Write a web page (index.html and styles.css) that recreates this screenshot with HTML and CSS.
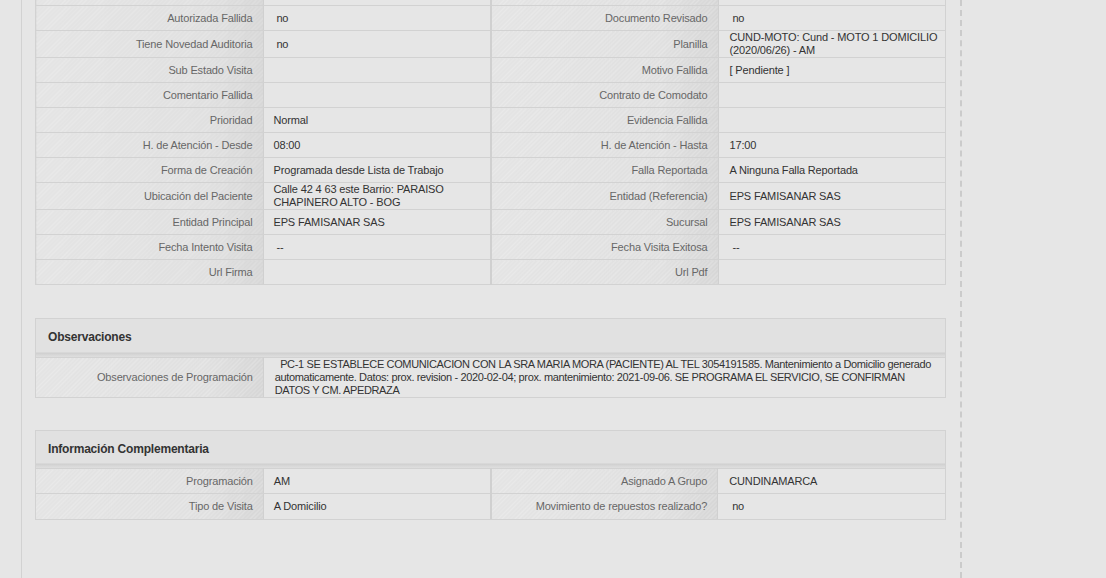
FILE: index.html
```html
<!DOCTYPE html>
<html lang="es">
<head>
    <meta charset="UTF-8">
    <title>Detalle de Visita</title>
    <link rel="stylesheet" href="styles.css">
</head>
<body>
    <div class="page">
        <div class="rail"></div>

        <div class="main">
            <!-- datos generales -->
            <table class="grid">
                <tr><td class="lbl"></td><td class="val"></td><td class="lbl sep"></td><td class="val"></td></tr>
                <tr><td class="lbl">Autorizada Fallida</td><td class="val">&nbsp;no</td><td class="lbl sep">Documento Revisado</td><td class="val">&nbsp;no</td></tr>
                <tr><td class="lbl">Tiene Novedad Auditoria</td><td class="val">&nbsp;no</td><td class="lbl sep">Planilla</td><td class="val">CUND-MOTO: Cund - MOTO 1 DOMICILIO (2020/06/26) - AM</td></tr>
                <tr><td class="lbl">Sub Estado Visita</td><td class="val"></td><td class="lbl sep">Motivo Fallida</td><td class="val">[ Pendiente ]</td></tr>
                <tr><td class="lbl">Comentario Fallida</td><td class="val"></td><td class="lbl sep">Contrato de Comodato</td><td class="val"></td></tr>
                <tr><td class="lbl">Prioridad</td><td class="val">Normal</td><td class="lbl sep">Evidencia Fallida</td><td class="val"></td></tr>
                <tr><td class="lbl">H. de Atención - Desde</td><td class="val">08:00</td><td class="lbl sep">H. de Atención - Hasta</td><td class="val">17:00</td></tr>
                <tr><td class="lbl">Forma de Creación</td><td class="val">Programada desde Lista de Trabajo</td><td class="lbl sep">Falla Reportada</td><td class="val">A Ninguna Falla Reportada</td></tr>
                <tr><td class="lbl">Ubicación del Paciente</td><td class="val">Calle 42 4 63 este Barrio: PARAISO CHAPINERO ALTO - BOG</td><td class="lbl sep">Entidad (Referencia)</td><td class="val">EPS FAMISANAR SAS</td></tr>
                <tr><td class="lbl">Entidad Principal</td><td class="val">EPS FAMISANAR SAS</td><td class="lbl sep">Sucursal</td><td class="val">EPS FAMISANAR SAS</td></tr>
                <tr><td class="lbl">Fecha Intento Visita</td><td class="val">&nbsp;--</td><td class="lbl sep">Fecha Visita Exitosa</td><td class="val">&nbsp;--</td></tr>
                <tr><td class="lbl">Url Firma</td><td class="val"></td><td class="lbl sep">Url Pdf</td><td class="val"></td></tr>
            </table>

            <div class="panel">
                <div class="panel-head">Observaciones</div>
                <table class="grid">
                    <tr>
                        <td class="lbl">Observaciones de Programación</td>
                        <td class="val wide" colspan="3">&nbsp;&nbsp;PC-1 SE ESTABLECE COMUNICACION CON LA SRA MARIA MORA (PACIENTE) AL TEL 3054191585. Mantenimiento a Domicilio generado automaticamente. Datos: prox. revision - 2020-02-04; prox. mantenimiento: 2021-09-06. SE PROGRAMA EL SERVICIO, SE CONFIRMAN DATOS Y CM. APEDRAZA</td>
                    </tr>
                </table>
            </div>

            <div class="panel">
                <div class="panel-head">Información Complementaria</div>
                <table class="grid">
                    <tr><td class="lbl">Programación</td><td class="val">AM</td><td class="lbl sep">Asignado A Grupo</td><td class="val">CUNDINAMARCA</td></tr>
                    <tr><td class="lbl">Tipo de Visita</td><td class="val">A Domicilio</td><td class="lbl sep">Movimiento de repuestos realizado?</td><td class="val">&nbsp;no</td></tr>
                </table>
            </div>
        </div>

        <div class="divider"></div>
    </div>
</body>
</html>
```

FILE: styles.css
```css
* {
    box-sizing: border-box;
}

html, body {
    margin: 0;
    padding: 0;
    height: 100%;
    overflow: hidden;
    background: #e6e6e6;
    font-family: "Liberation Sans", Arial, sans-serif;
    font-size: 11px;
    letter-spacing: -0.15px;
    color: #333;
}

.page {
    display: flex;
    min-height: 100%;
}

.rail {
    width: 22px;
    border-right: 1px solid #d2d2d2;
    flex-shrink: 0;
}

.main {
    width: 911px;
    margin-left: 13px;
    margin-top: -20px;
    flex-shrink: 0;
}

.divider {
    margin-left: 14px;
    border-left: 2px dashed #cbcbcb;
}

/* tablas de datos */
.grid {
    width: 100%;
    border-collapse: collapse;
    table-layout: fixed;
    border: 1px solid #d2d2d2;
}

.grid td {
    height: 25px;
    line-height: 13px;
    border-top: 1px solid #d2d2d2;
    border-bottom: 1px solid #d2d2d2;
    vertical-align: middle;
    padding: 0 10px;
    width: 25%;
}

.grid .lbl {
    text-align: right;
    color: #676767;
    border-right: 1px solid #d0d0d0;
    background:
        repeating-linear-gradient(135deg, rgba(255,255,255,0.18) 0 1px, transparent 1px 3px),
        linear-gradient(to right, #e4e4e4 0%, #e0e0e0 75%, #d6d6d6 100%);
}

.grid .lbl.sep {
    border-left: 2px solid #d0d0d0;
}

.grid .val {
    background: #e6e6e6;
    color: #333;
    padding-right: 4px;
}

.grid .val.wide {
    width: 75%;
    height: 39px;
    letter-spacing: -0.36px;
    padding-left: 10px;
}

.grid .val:last-child {
    padding-left: 11px;
}

/* paneles */
.panel {
    margin-top: 33px;
    border: 1px solid #d2d2d2;
}

.panel + .panel {
    margin-top: 32px;
}

.panel .grid {
    border: none;
}

.panel .grid tr:last-child td {
    border-bottom: none;
}

.panel-head {
    height: 38px;
    line-height: 37px;
    padding-left: 12px;
    font-size: 12px;
    font-weight: bold;
    letter-spacing: -0.2px;
    color: #333;
    background: linear-gradient(to bottom, #e1e1e1 0, #e1e1e1 33px, #cfcfcf 34px, #d8d8d8 36px, #dedede 38px);
}

.panel + .panel .panel-head {
    height: 37px;
    line-height: 37px;
    background: linear-gradient(to bottom, #e1e1e1 0, #e1e1e1 32px, #cfcfcf 33px, #d8d8d8 35px, #dedede 37px);
}
```
